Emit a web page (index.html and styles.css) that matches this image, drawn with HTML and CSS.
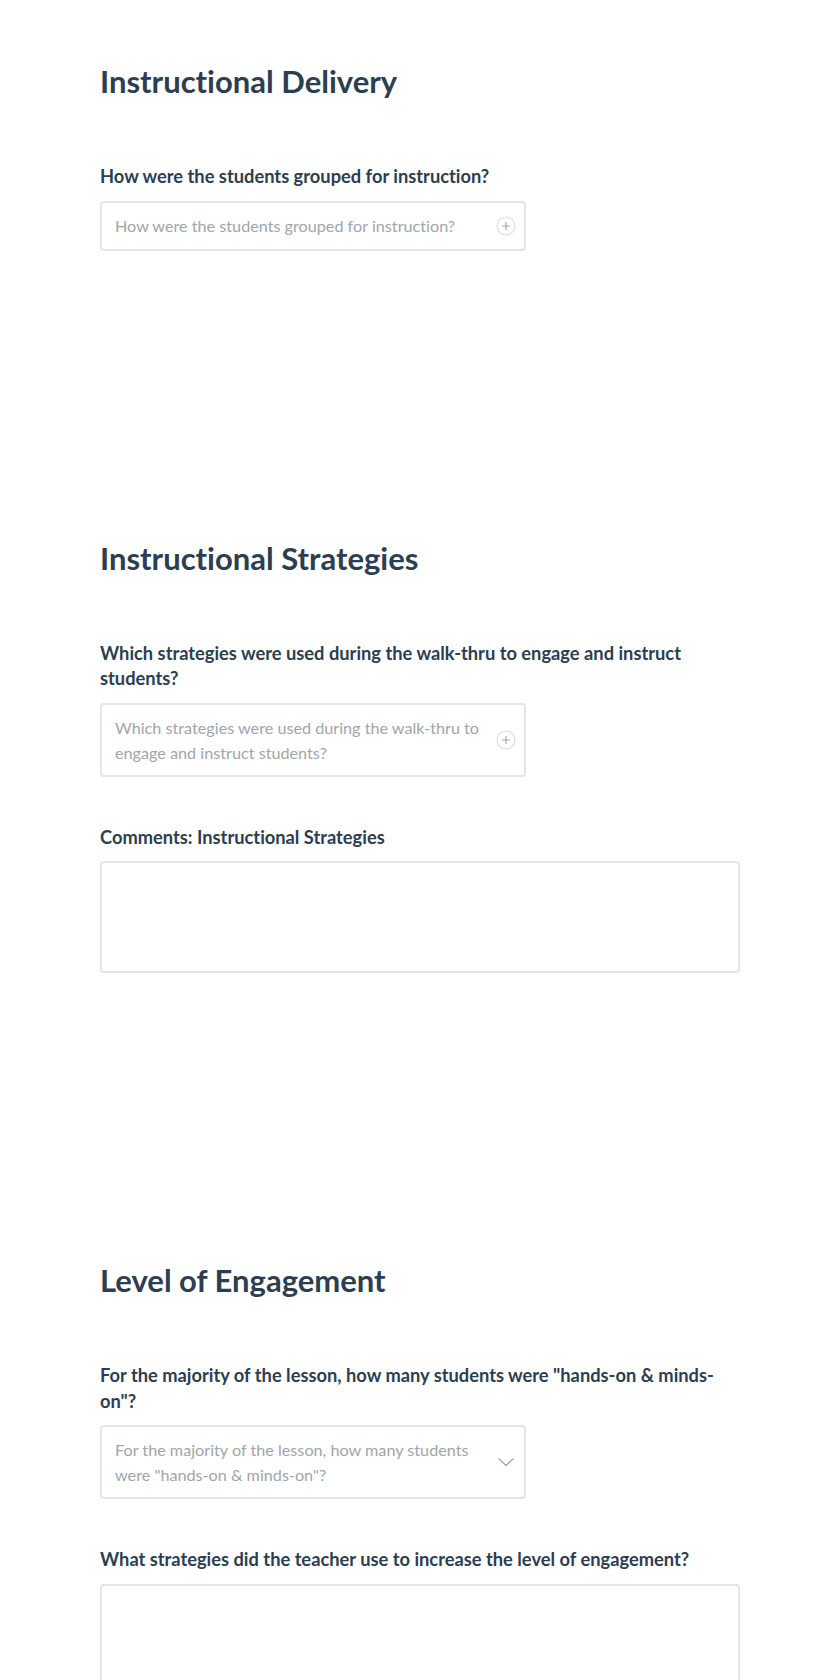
FILE: index.html
```html
<!DOCTYPE html>
<html lang="en">
<head>
<meta charset="utf-8">
<title>Walk-thru Form</title>
<link rel="stylesheet" href="styles.css">
</head>
<body>
<main class="form">
  <section class="section">
    <h2 class="section-title">Instructional Delivery</h2>
    <div class="field">
      <label class="field-label">How were the students grouped for instruction?</label>
      <div class="picker">
        <span class="placeholder">How were the students grouped for instruction?</span>
        <svg class="icon" width="20" height="20" viewBox="0 0 20 20"><circle cx="10" cy="10" r="9" fill="none" stroke="#dcdee1" stroke-width="1.2"/><path d="M10 6v8M6 10h8" stroke="#a3a7ad" stroke-width="1.2" fill="none"/></svg>
      </div>
    </div>
  </section>

  <section class="section">
    <h2 class="section-title">Instructional Strategies</h2>
    <div class="field">
      <label class="field-label">Which strategies were used during the walk-thru to engage and instruct students?</label>
      <div class="picker">
        <span class="placeholder">Which strategies were used during the walk-thru to engage and instruct students?</span>
        <svg class="icon" width="20" height="20" viewBox="0 0 20 20"><circle cx="10" cy="10" r="9" fill="none" stroke="#dcdee1" stroke-width="1.2"/><path d="M10 6v8M6 10h8" stroke="#a3a7ad" stroke-width="1.2" fill="none"/></svg>
      </div>
    </div>
    <div class="field">
      <label class="field-label">Comments: Instructional Strategies</label>
      <div class="textarea"></div>
    </div>
  </section>

  <section class="section">
    <h2 class="section-title">Level of Engagement</h2>
    <div class="field">
      <label class="field-label">For the majority of the lesson, how many students were "hands-on &amp; minds-on"?</label>
      <div class="picker">
        <span class="placeholder">For the majority of the lesson, how many students were "hands-on &amp; minds-on"?</span>
        <svg class="icon" width="20" height="20" viewBox="0 0 20 20"><path d="M3 7l7 6.5 7-6.5" stroke="#a3a7ad" stroke-width="1.4" fill="none" stroke-linecap="round" stroke-linejoin="round"/></svg>
      </div>
    </div>
    <div class="field">
      <label class="field-label">What strategies did the teacher use to increase the level of engagement?</label>
      <div class="textarea"></div>
    </div>
  </section>
</main>
</body>
</html>
```

FILE: styles.css
```css
* { box-sizing: border-box; }
html, body { margin: 0; padding: 0; background: #ffffff; }
body {
  font-family: Lato, "Liberation Sans", sans-serif;
  color: #2c3e50;
  font-variant-ligatures: none;
}
.form {
  width: 640px;
  margin-left: 100px;
}
.section {
  padding-top: 62px;
  padding-bottom: 226px;
  display: flex;
  flex-direction: column;
}
.section-title {
  margin: 0 0 64px 0;
  font-size: 31px;
  line-height: 38px;
  font-weight: 700;
  color: #2c3e50;
}
.field {
  display: flex;
  flex-direction: column;
  gap: 11px;
  margin-bottom: 48px;
}
.field:last-child { margin-bottom: 0; }
.field-label {
  display: block;
  font-size: 18.3px;
  line-height: 25.5px;
  font-weight: 700;
  color: #2c3e50;
}
.picker {
  width: 426px;
  min-height: 50px;
  border: 2px solid #e4e5e7;
  border-radius: 4px;
  padding: 10px 8px 10px 13px;
  display: flex;
  align-items: center;
  justify-content: space-between;
  gap: 12px;
}
.placeholder {
  font-size: 16.2px;
  line-height: 25px;
  color: #a1a5ab;
  max-width: 376px;
}
.icon { flex: none; }
.textarea {
  width: 640px;
  height: 112px;
  border: 2px solid #e4e5e7;
  border-radius: 4px;
}
```
